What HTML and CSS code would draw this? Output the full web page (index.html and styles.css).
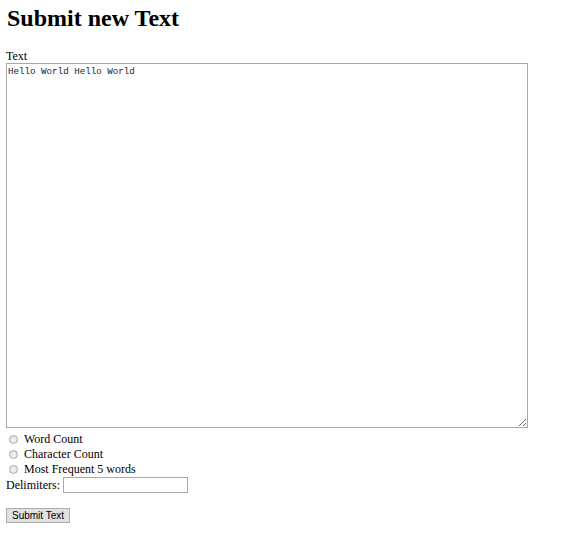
FILE: index.html
```html
<!DOCTYPE html>
<html>
<head>
<meta charset="utf-8">
<title>Submit new Text</title>
<link rel="stylesheet" href="styles.css">
</head>
<body>
<h1 class="title">Submit new Text</h1>
<form class="form">
  <label class="field-label" for="text">Text</label>
  <textarea id="text" class="text-area">Hello World Hello World</textarea>
  <label class="option"><input type="radio" name="mode" class="radio"><span>Word Count</span></label>
  <label class="option"><input type="radio" name="mode" class="radio"><span>Character Count</span></label>
  <label class="option"><input type="radio" name="mode" class="radio"><span>Most Frequent 5 words</span></label>
  <div class="delims"><label for="delim">Delimiters:</label><input id="delim" type="text" class="delim-input"></div>
  <button type="button" class="submit">Submit Text</button>
</form>
</body>
</html>
```
FILE: styles.css
```css
html, body {
  background: #fff;
}
body {
  margin: 0 6px;
  font-family: "Liberation Serif", "Times New Roman", serif;
  font-size: 12px;
  color: #000;
}
.title {
  font-size: 24px;
  font-weight: bold;
  line-height: 28px;
  margin: 4px 0 17px 1px;
}
.form {
  display: flex;
  flex-direction: column;
  align-items: flex-start;
}
.field-label {
  line-height: 14px;
  height: 14px;
}
.text-area {
  box-sizing: border-box;
  width: 522px;
  height: 365px;
  margin: 0 0 4px;
  padding: 2px 1px 1px;
  border: 1px solid #a9a9a9;
  font-family: "Liberation Mono", "Courier New", monospace;
  font-size: 9.2px;
  line-height: 12px;
  color: #222;
  resize: both;
}
.option {
  display: flex;
  align-items: center;
  height: 15px;
  line-height: 15px;
}
.radio {
  appearance: none;
  -webkit-appearance: none;
  box-sizing: border-box;
  width: 9px;
  height: 9px;
  margin: 0 6px 0 3px;
  border: 1px solid #a8a8a8;
  border-radius: 50%;
  background: radial-gradient(circle at 50% 60%, #f4f4f4 0%, #dcdcdc 100%);
}
.delims {
  display: flex;
  align-items: center;
  height: 16px;
}
.delim-input {
  box-sizing: border-box;
  width: 125px;
  height: 16px;
  margin: 0 0 0 3px;
  padding: 0 2px;
  border: 1px solid #a9a9a9;
  font-size: 10px;
}
.submit {
  box-sizing: border-box;
  margin-top: 15px;
  width: 64px;
  height: 15px;
  padding: 0;
  border: 1px solid #adadad;
  background: #e1e1e1;
  font-family: "Liberation Sans", Arial, sans-serif;
  font-size: 10px;
  line-height: 13px;
  color: #000;
  border-radius: 0;
}
```
